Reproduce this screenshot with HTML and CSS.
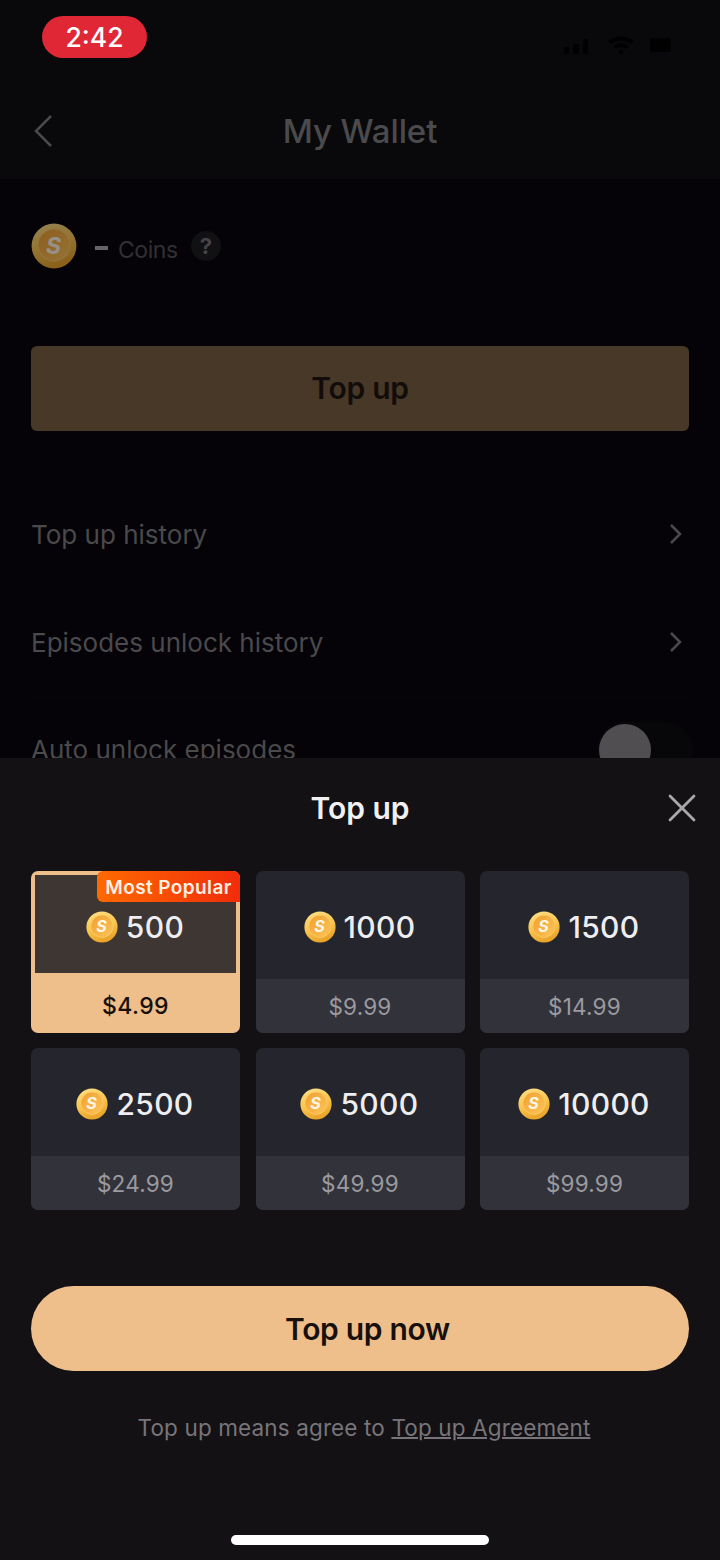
FILE: index.html
```html
<!DOCTYPE html>
<html lang="en">
<head>
<meta charset="utf-8">
<title>My Wallet</title>
<link rel="stylesheet" href="styles.css">
</head>
<body>
<svg class="defs" aria-hidden="true">
  <defs>
    <linearGradient id="rim" x1="0" y1="0" x2="0.35" y2="1"><stop offset="0" stop-color="#ffe08c"/><stop offset="0.55" stop-color="#fbc751"/><stop offset="1" stop-color="#eba52a"/></linearGradient>
    <linearGradient id="face" x1="0" y1="0" x2="1" y2="1"><stop offset="0" stop-color="#f0a030"/><stop offset="1" stop-color="#fdc45a"/></linearGradient>
    <symbol id="coin" viewBox="0 0 32 32">
      <circle cx="16" cy="16" r="15.6" fill="url(#rim)"/>
      <circle cx="16" cy="15.3" r="11.4" fill="#fccb62"/>
      <circle cx="16" cy="15.3" r="10.7" fill="url(#face)"/>
      <text class="coin-letter" x="15.7" y="21.4" text-anchor="middle" fill="#fff6e6">S</text>
    </symbol>
  </defs>
</svg>
<div class="screen">
  <header class="top">
    <div class="status">
      <span class="time">2:42</span>
      <svg class="signals" width="130" height="24" viewBox="0 0 130 24">
        <path d="M4 14h5v7H4zM13 11h6v10h-6zM23 6h5v15h-5z"/>
        <path d="M48 8q13-9 26 0l-3 3q-10-7-20 0zM53 13q8-6 16 0l-3 3q-5-4-10 0zM58 18q3-2 6 0l-3 4z"/>
        <rect x="90" y="5" width="21" height="14" rx="2"/>
      </svg>
    </div>
    <div class="nav">
      <svg class="back" width="20" height="34" viewBox="0 0 20 34"><path d="M18 2 3 17l15 15"/></svg>
      <h1>My Wallet</h1>
    </div>
  </header>
  <main class="wallet">
    <div class="balance">
      <svg class="coin-big"><use href="#coin"/></svg>
      <span class="dash"></span>
      <span class="unit">Coins</span>
      <span class="help">?</span>
    </div>
    <div class="topup">Top up</div>
    <div class="row"><span>Top up history</span><svg class="chev" width="14" height="22" viewBox="0 0 14 22"><path d="m2 1 9 9-9 9"/></svg></div>
    <div class="row"><span>Episodes unlock history</span><svg class="chev" width="14" height="22" viewBox="0 0 14 22"><path d="m2 1 9 9-9 9"/></svg></div>
    <div class="row last"><span>Auto unlock episodes</span><span class="toggle"><i></i></span></div>
  </main>
  <section class="sheet">
    <div class="sheet-head">
      <h2>Top up</h2>
      <svg class="close" width="30" height="30" viewBox="0 0 30 30"><path d="m3 3 24 24M27 3 3 27"/></svg>
    </div>
    <div class="packs">
      <div class="pack selected"><div class="amount"><svg class="coin"><use href="#coin"/></svg><span>500</span></div><div class="price">$4.99</div><div class="badge">Most Popular</div></div>
      <div class="pack"><div class="amount"><svg class="coin"><use href="#coin"/></svg><span>1000</span></div><div class="price">$9.99</div></div>
      <div class="pack"><div class="amount"><svg class="coin"><use href="#coin"/></svg><span>1500</span></div><div class="price">$14.99</div></div>
      <div class="pack"><div class="amount"><svg class="coin"><use href="#coin"/></svg><span>2500</span></div><div class="price">$24.99</div></div>
      <div class="pack"><div class="amount"><svg class="coin"><use href="#coin"/></svg><span>5000</span></div><div class="price">$49.99</div></div>
      <div class="pack"><div class="amount"><svg class="coin"><use href="#coin"/></svg><span>10000</span></div><div class="price">$99.99</div></div>
    </div>
    <div class="now">Top up now</div>
    <p class="terms">Top up means agree to <a>Top up Agreement</a></p>
    <div class="home"></div>
  </section>
</div>
</body>
</html>
```
FILE: styles.css
```css
* { box-sizing: border-box; }
body { margin: 0; background: #050307; font-family: Inter, "Liberation Sans", sans-serif; }
h1, h2, p { margin: 0; }
svg { display: block; flex: none; }
.defs { position: absolute; width: 0; height: 0; }
.coin-letter { font: italic 700 16px Inter, sans-serif; }
.screen { position: relative; width: 720px; height: 1560px; overflow: hidden; }

.top { height: 179px; background: #09090b; }
.status { display: flex; justify-content: space-between; padding: 16px 30px 0 42px; height: 80px; }
.time { width: 105px; height: 42px; border-radius: 21px; background: #df2735; color: #fff; font-size: 26.5px; font-weight: 500; line-height: 43px; text-align: center; }
.signals { margin-top: 17px; fill: #010102; }
.nav { display: grid; grid-template-columns: 60px 1fr 60px; align-items: center; padding: 0 31px; height: 102px; }
.back { margin-left: 2px; }
.back path, .chev path, .close path { fill: none; stroke: #4a494b; stroke-width: 2.5; }
.nav h1 { font-size: 33px; font-weight: 500; color: #4b4a4c; text-align: center; letter-spacing: -.1px; line-height: 40px; }

.wallet { padding: 44px 31px 0; }
.balance { display: flex; align-items: center; height: 46px; }
.coin-big { width: 46px; height: 46px; opacity: .58; }
.dash { width: 13px; height: 4px; margin: 4px 10px 0 18px; background: #656366; }
.unit { width: 60px; font-size: 23px; color: #313033; margin-top: 7px; letter-spacing: -.45px; white-space: nowrap; }
.help { width: 30px; height: 30px; margin-left: 13px; border-radius: 50%; background: #111013; color: #454447; font-size: 22px; font-weight: 700; line-height: 30px; text-align: center; }
.topup { height: 85px; margin: 77px 0 50px; border-radius: 6px; background: #483827; color: #120d0a; font-size: 30px; font-weight: 600; letter-spacing: -.3px; line-height: 85px; text-align: center; }
.row { display: flex; align-items: center; justify-content: space-between; height: 108px; border-bottom: 1px solid #070509; font-size: 26px; letter-spacing: 0; color: #4a494c; padding-right: 6px; }
.row.last { height: 105px; border: 0; padding: 0; }
.toggle { width: 96px; height: 56px; margin-right: -4px; border-radius: 28px; background: #070609; padding: 2px; }
.toggle i { display: block; width: 52px; height: 52px; border-radius: 50%; background: #504e51; }

.sheet { position: absolute; left: 0; top: 758px; width: 720px; height: 802px; background: #131114; padding: 0 31px; }
.sheet-head { display: grid; grid-template-columns: 40px 1fr 40px; height: 100px; align-items: center; }
.sheet-head h2 { grid-column: 2; font-size: 30px; font-weight: 600; color: #f1f0f2; text-align: center; }
.close { justify-self: end; margin-right: -8px; }
.close path { stroke: #aaa8ab; stroke-width: 2.8; stroke-linecap: round; }
.packs { display: grid; grid-template-columns: repeat(3, 209px); justify-content: space-between; row-gap: 15px; margin-top: 13px; }
.pack { position: relative; height: 162px; border-radius: 7px; overflow: hidden; background: #25262d; }
.amount { display: flex; height: 108px; align-items: center; justify-content: center; gap: 8px; padding: 4px 1px 0 0; font-size: 30px; font-weight: 500; letter-spacing: .35px; color: #eeedf0; }
.coin { width: 32px; height: 32px; }
.price { height: 54px; background: #32323a; color: #9b9a9f; font-size: 22.5px; letter-spacing: .2px; line-height: 56px; text-align: center; }
.selected { background: #efbf8b; padding: 4px; }
.selected .amount { height: 98px; background: #3d3633; padding-top: 6px; }
.selected .price { height: 60px; background: none; color: #17100c; font-size: 23px; font-weight: 500; letter-spacing: .4px; line-height: 67px; }
.badge { position: absolute; top: 0; right: 0; width: 143px; height: 31px; border-radius: 6px 0 0 6px; background: linear-gradient(90deg, #ff6a00, #f12c0b); color: #fff0e4; font-size: 19px; font-weight: 600; line-height: 33px; text-align: center; letter-spacing: .4px; }
.now { height: 85px; margin-top: 76px; padding-left: 15px; border-radius: 43px; background: #efbf8b; color: #17100c; font-size: 30px; font-weight: 600; letter-spacing: -.3px; line-height: 87px; text-align: center; }
.terms { margin-top: 40px; padding-left: 8px; font-size: 22.5px; letter-spacing: .13px; line-height: 34px; color: #77757a; text-align: center; white-space: nowrap; }
.terms a { text-decoration: underline; text-decoration-thickness: 2px; }
.home { width: 258px; height: 10px; margin: 90px auto 0; border-radius: 5px; background: #fff; }
```
